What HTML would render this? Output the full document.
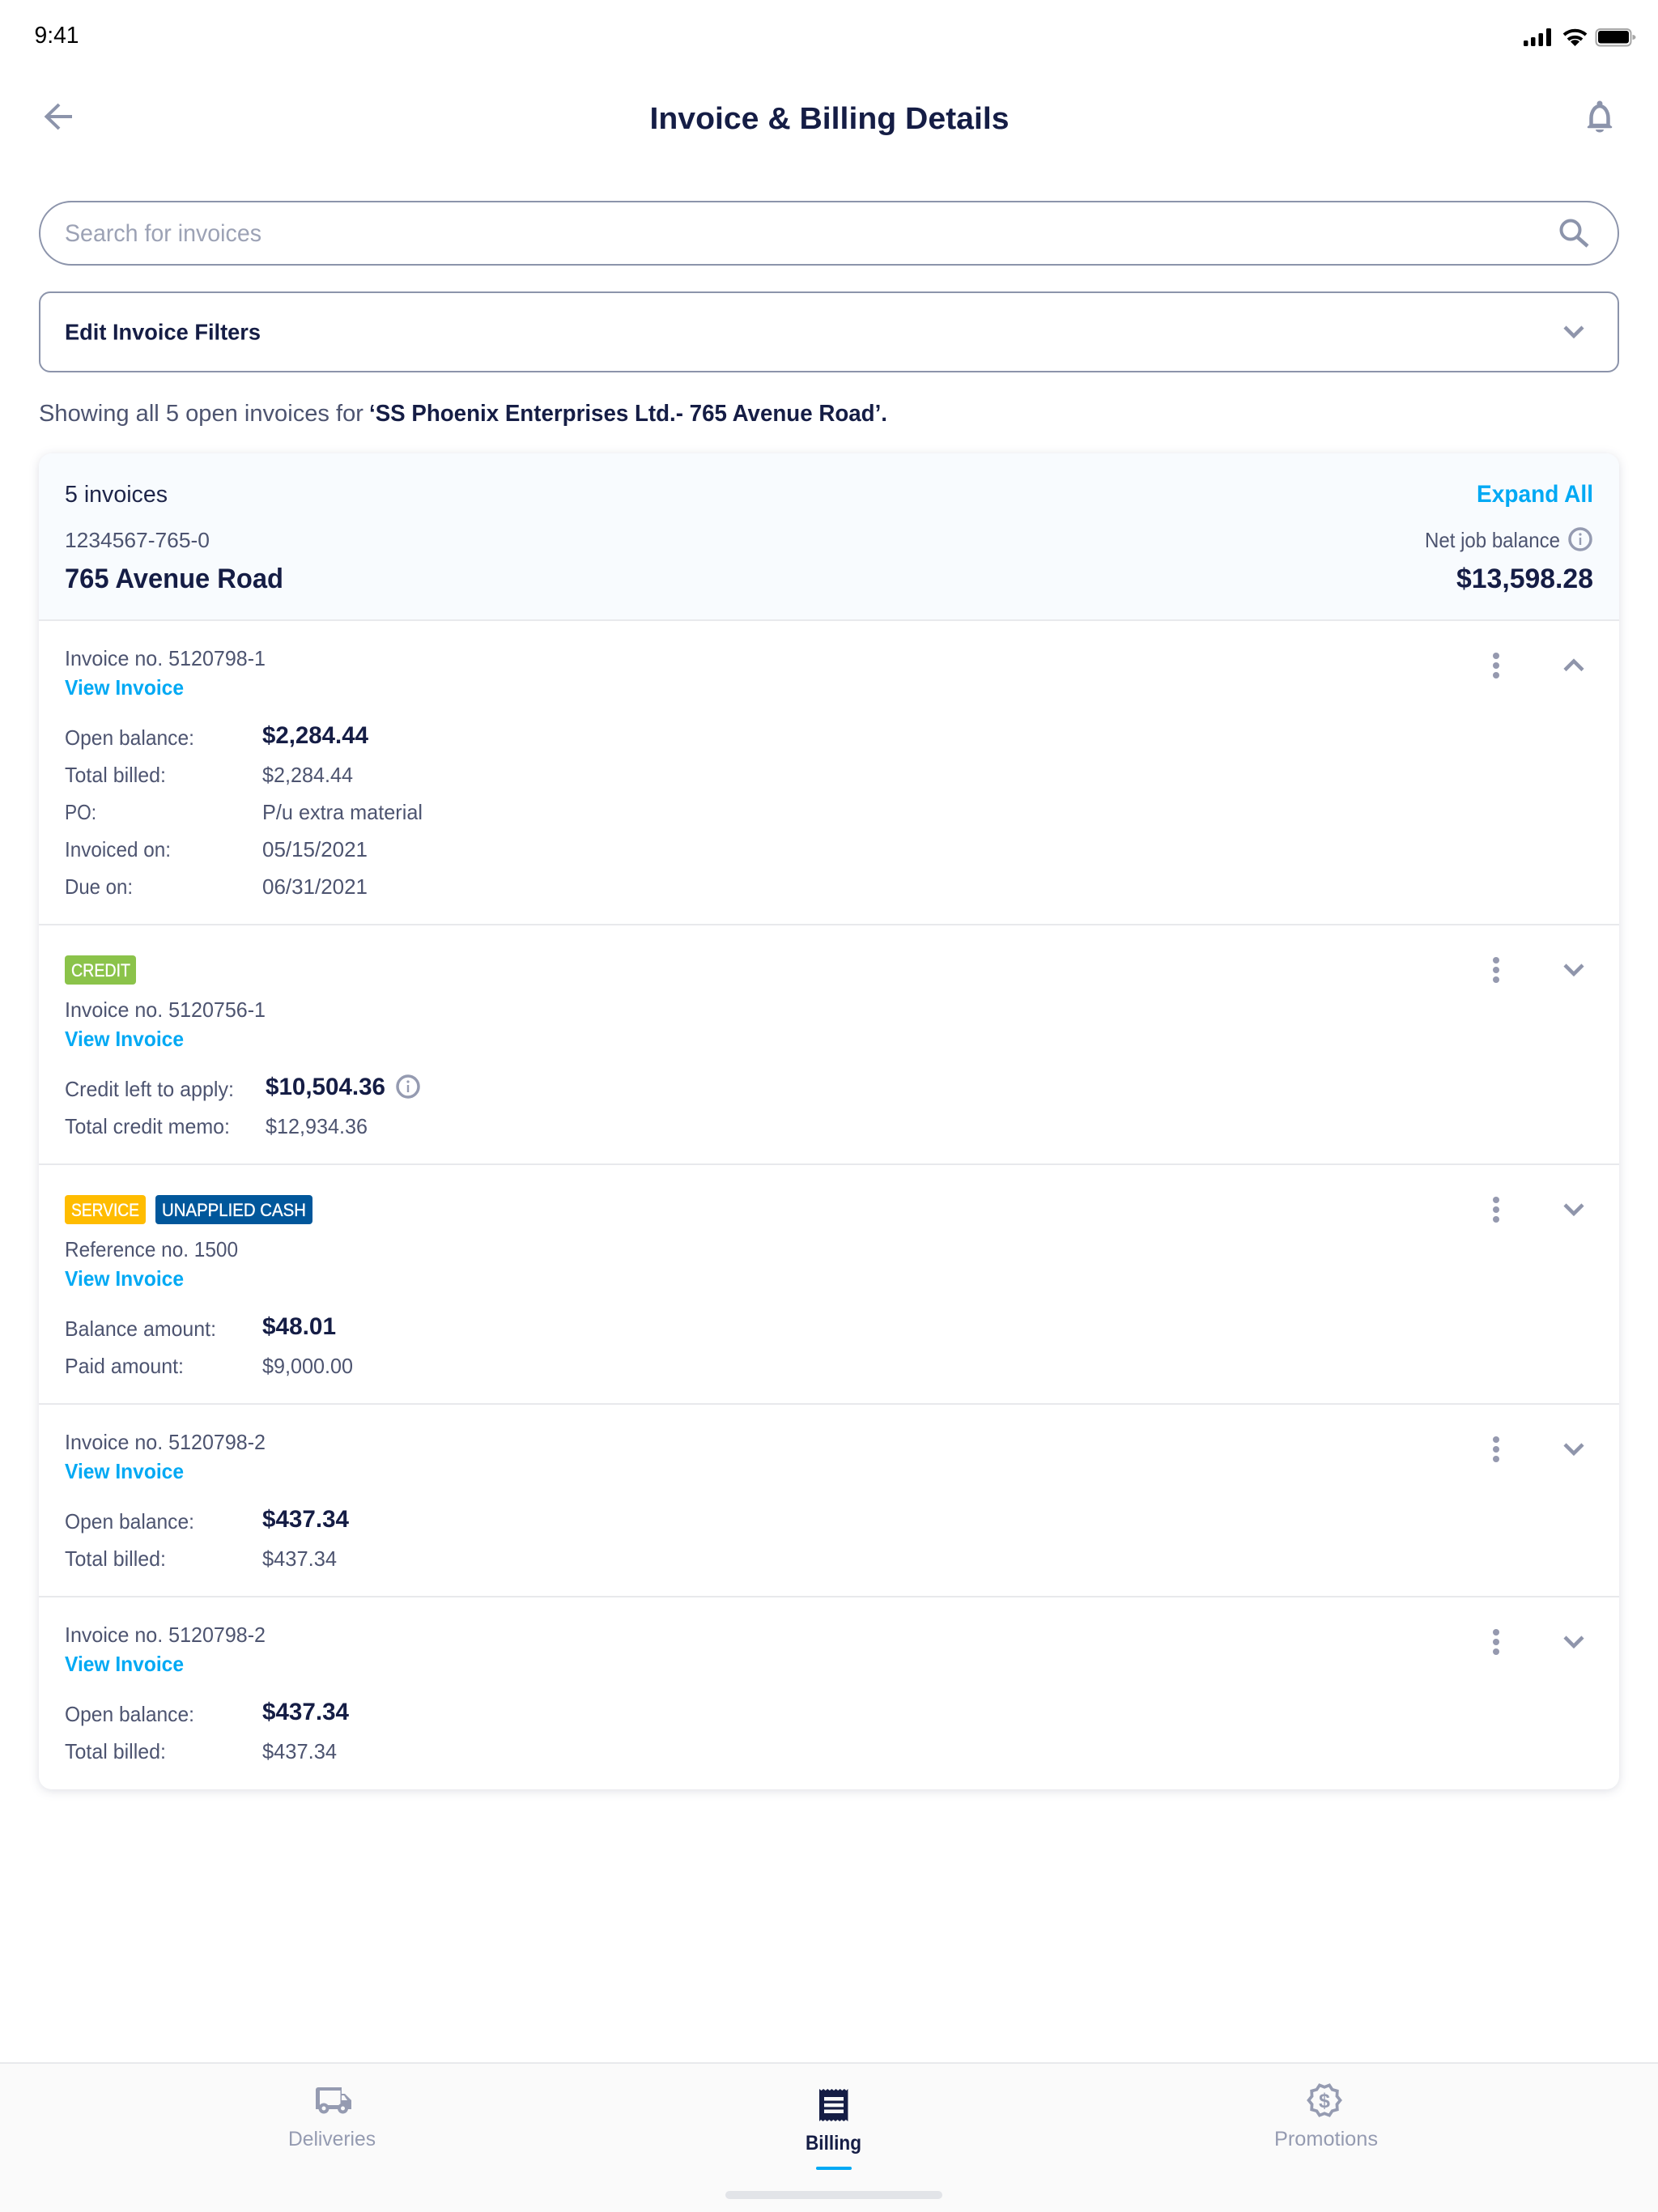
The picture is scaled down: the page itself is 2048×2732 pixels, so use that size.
<!DOCTYPE html>
<html lang="en"><head><meta charset="utf-8"><title>Invoice &amp; Billing Details</title>
<style>
html,body{margin:0;padding:0;background:#fff;width:2048px;height:2732px;overflow:hidden}
svg{display:block}
text{font-family:"Liberation Sans",sans-serif;}
.l{font-size:26px;fill:#4d5470}
.v{font-size:26px;font-weight:700;fill:#00a9f4}
.b{font-size:30px;font-weight:700;fill:#151d45}
.n{stroke:#8c94ab;fill:none}
.t{font-size:22px;fill:#fff;stroke:#fff;stroke-width:.35}
.i{stroke:#959bb1;fill:none;stroke-width:3.5}
.c{stroke:#8f95ab;fill:none;stroke-width:4.5}
</style></head><body>
<svg width="2048" height="2732" viewBox="0 0 2048 2732" xmlns="http://www.w3.org/2000/svg">
<defs>
<g id="dots"><circle cx="0" cy="-12" r="4" fill="#9599af"/><circle cx="0" cy="0" r="4" fill="#9599af"/><circle cx="0" cy="12" r="4" fill="#9599af"/></g>
<path id="down" class="c" d="M-11 -6L0 5L11 -6"/>
<g id="info"><circle r="13" class="i"/><rect x="-1.2" y="-2" width="2.4" height="9" fill="#959bb1"/><circle cy="-6" r="1.6" fill="#959bb1"/></g>
<clipPath id="top"><path d="M48 767V576a16 16 0 0 1 16-16H1984a16 16 0 0 1 16 16V767z"/></clipPath>
</defs>
<rect width="2048" height="2732" fill="#fff"/>

<!-- status bar -->
<text x="42.500" y="53" font-size="29" fill="#000" textLength="55" lengthAdjust="spacingAndGlyphs">9:41</text>
<g fill="#000"><rect x="1882" y="50" width="5.500" height="7" rx="1.500"/><rect x="1891" y="46" width="5.500" height="11" rx="1.500"/><rect x="1900.500" y="41" width="5.500" height="16" rx="1.500"/><rect x="1910" y="35" width="6" height="22" rx="1.500"/></g>
<g fill="none" stroke="#000" stroke-width="4"><path d="M1932 43a20 20 0 0 1 27 0"/><path d="M1937 49a13 13 0 0 1 17 0"/></g>
<path d="M1945.500 57l-5.500-5.500a8 8 0 0 1 11 0z" fill="#000"/>
<rect x="1971.500" y="36" width="43" height="20.500" rx="5" fill="none" stroke="#a6a6a6" stroke-width="2"/>
<rect x="1974" y="38" width="38" height="15.500" rx="3" fill="#000"/>
<path d="M2016.500 43a4 3 0 0 1 0 6z" fill="#a6a6a6"/>

<!-- header -->
<path d="M73 129L57.500 144L73 159M58 144H89" class="n" stroke-width="4"/>
<text x="802.500" y="159" font-size="38" font-weight="700" fill="#151d45" textLength="444" lengthAdjust="spacingAndGlyphs">Invoice &amp; Billing Details</text>
<path d="M1965.500 156V146a10.500 15 0 0 1 21 0V156" class="n" stroke-width="4.500"/>
<circle cx="1976" cy="128" r="3.500" fill="#8c94ab"/>
<path d="M1962 157l4-3h20l4 3z" fill="#8c94ab" stroke="#8c94ab" stroke-width="2.500" stroke-linejoin="round"/>
<path d="M1971 160h10a5 3.500 0 0 1-10 0z" fill="#8c94ab"/>

<!-- search -->
<rect x="49" y="249" width="1950" height="78" rx="39" fill="#fff" stroke="#8c94ab" stroke-width="2"/>
<text x="80" y="298" font-size="30" fill="#9ca2b5" textLength="243" lengthAdjust="spacingAndGlyphs">Search for invoices</text>
<circle cx="1940" cy="284" r="11.500" class="n" stroke-width="4"/><path d="M1948.500 293L1961 304" class="n" stroke-width="4.500"/>

<!-- filters -->
<rect x="49" y="361" width="1950" height="98" rx="13" fill="#fff" stroke="#8c94ab" stroke-width="2"/>
<text x="80" y="419.500" font-size="28" font-weight="700" fill="#151d45" textLength="242" lengthAdjust="spacingAndGlyphs">Edit Invoice Filters</text>
<use href="#down" x="1944" y="410"/>

<text x="48" y="520" font-size="29" fill="#4d5470" textLength="401" lengthAdjust="spacingAndGlyphs">Showing all 5 open invoices for</text>
<text x="456" y="520" font-size="29" font-weight="700" fill="#151d45" textLength="640" lengthAdjust="spacingAndGlyphs">‘SS Phoenix Enterprises Ltd.- 765 Avenue Road’.</text>

<!-- card -->
<rect x="48" y="560" width="1952" height="1650" rx="16" fill="#fff" style="filter:drop-shadow(0 2px 6px rgba(20,30,70,.14))"/>
<rect x="48" y="560" width="1952" height="207" fill="#f8fbfe" clip-path="url(#top)"/>
<g fill="#e8e9ec"><rect x="48" y="765" width="1952" height="2"/><rect x="48" y="1141" width="1952" height="2"/><rect x="48" y="1437" width="1952" height="2"/><rect x="48" y="1733" width="1952" height="2"/><rect x="48" y="1971" width="1952" height="2"/></g>

<text x="80" y="620" font-size="29" fill="#1e2549" textLength="127" lengthAdjust="spacingAndGlyphs">5 invoices</text>
<text x="80" y="676" class="l" textLength="179" lengthAdjust="spacingAndGlyphs">1234567-765-0</text>
<text x="80" y="726" font-size="34" font-weight="700" fill="#151d45" textLength="270" lengthAdjust="spacingAndGlyphs">765 Avenue Road</text>
<text x="1824" y="620" font-size="30" font-weight="700" fill="#00a9f4" textLength="144" lengthAdjust="spacingAndGlyphs">Expand All</text>
<text x="1760" y="676" class="l" textLength="167" lengthAdjust="spacingAndGlyphs">Net job balance</text>
<use href="#info" x="1952" y="666"/>
<text x="1799" y="726" font-size="34" font-weight="700" fill="#151d45" textLength="169" lengthAdjust="spacingAndGlyphs">$13,598.28</text>

<!-- row 1 -->
<text x="80" y="822" class="l" textLength="248" lengthAdjust="spacingAndGlyphs">Invoice no. 5120798-1</text>
<text x="80" y="858" class="v" textLength="147" lengthAdjust="spacingAndGlyphs">View Invoice</text>
<use href="#dots" x="1848" y="822"/>
<path class="c" d="M1933 827.500L1944 816.500L1955 827.500"/>
<text x="80" y="920" class="l" textLength="160" lengthAdjust="spacingAndGlyphs">Open balance:</text>
<text x="324" y="918" class="b" textLength="131" lengthAdjust="spacingAndGlyphs">$2,284.44</text>
<text x="80" y="966" class="l" textLength="125" lengthAdjust="spacingAndGlyphs">Total billed:</text>
<text x="324" y="966" class="l" textLength="112" lengthAdjust="spacingAndGlyphs">$2,284.44</text>
<text x="80" y="1012" class="l" textLength="39" lengthAdjust="spacingAndGlyphs">PO:</text>
<text x="324" y="1012" class="l" textLength="198" lengthAdjust="spacingAndGlyphs">P/u extra material</text>
<text x="80" y="1058" class="l" textLength="131" lengthAdjust="spacingAndGlyphs">Invoiced on:</text>
<text x="324" y="1058" class="l" textLength="130" lengthAdjust="spacingAndGlyphs">05/15/2021</text>
<text x="80" y="1104" class="l" textLength="84" lengthAdjust="spacingAndGlyphs">Due on:</text>
<text x="324" y="1104" class="l" textLength="130" lengthAdjust="spacingAndGlyphs">06/31/2021</text>

<!-- row 2 -->
<rect x="80" y="1180" width="88" height="36" rx="4" fill="#8bc34a"/>
<text x="88" y="1206" class="t" textLength="73" lengthAdjust="spacingAndGlyphs">CREDIT</text>
<text x="80" y="1256" class="l" textLength="248" lengthAdjust="spacingAndGlyphs">Invoice no. 5120756-1</text>
<text x="80" y="1292" class="v" textLength="147" lengthAdjust="spacingAndGlyphs">View Invoice</text>
<use href="#dots" x="1848" y="1198"/><use href="#down" x="1944" y="1198"/>
<text x="80" y="1354" class="l" textLength="209" lengthAdjust="spacingAndGlyphs">Credit left to apply:</text>
<text x="328" y="1352" class="b" textLength="148" lengthAdjust="spacingAndGlyphs">$10,504.36</text>
<use href="#info" x="504" y="1342"/>
<text x="80" y="1400" class="l" textLength="204" lengthAdjust="spacingAndGlyphs">Total credit memo:</text>
<text x="328" y="1400" class="l" textLength="126" lengthAdjust="spacingAndGlyphs">$12,934.36</text>

<!-- row 3 -->
<rect x="80" y="1476" width="100" height="36" rx="4" fill="#ffbc00"/>
<text x="88" y="1502" class="t" textLength="84" lengthAdjust="spacingAndGlyphs">SERVICE</text>
<rect x="192" y="1476" width="194" height="36" rx="4" fill="#01579b"/>
<text x="200" y="1502" class="t" textLength="178" lengthAdjust="spacingAndGlyphs">UNAPPLIED CASH</text>
<text x="80" y="1552" class="l" textLength="214" lengthAdjust="spacingAndGlyphs">Reference no. 1500</text>
<text x="80" y="1588" class="v" textLength="147" lengthAdjust="spacingAndGlyphs">View Invoice</text>
<use href="#dots" x="1848" y="1494"/><use href="#down" x="1944" y="1494"/>
<text x="80" y="1650" class="l" textLength="187" lengthAdjust="spacingAndGlyphs">Balance amount:</text>
<text x="324" y="1648" class="b" textLength="91" lengthAdjust="spacingAndGlyphs">$48.01</text>
<text x="80" y="1696" class="l" textLength="147" lengthAdjust="spacingAndGlyphs">Paid amount:</text>
<text x="324" y="1696" class="l" textLength="112" lengthAdjust="spacingAndGlyphs">$9,000.00</text>

<!-- row 4 -->
<text x="80" y="1790" class="l" textLength="248" lengthAdjust="spacingAndGlyphs">Invoice no. 5120798-2</text>
<text x="80" y="1826" class="v" textLength="147" lengthAdjust="spacingAndGlyphs">View Invoice</text>
<use href="#dots" x="1848" y="1790"/><use href="#down" x="1944" y="1790"/>
<text x="80" y="1888" class="l" textLength="160" lengthAdjust="spacingAndGlyphs">Open balance:</text>
<text x="324" y="1886" class="b" textLength="107" lengthAdjust="spacingAndGlyphs">$437.34</text>
<text x="80" y="1934" class="l" textLength="125" lengthAdjust="spacingAndGlyphs">Total billed:</text>
<text x="324" y="1934" class="l" textLength="92" lengthAdjust="spacingAndGlyphs">$437.34</text>

<!-- row 5 -->
<text x="80" y="2028" class="l" textLength="248" lengthAdjust="spacingAndGlyphs">Invoice no. 5120798-2</text>
<text x="80" y="2064" class="v" textLength="147" lengthAdjust="spacingAndGlyphs">View Invoice</text>
<use href="#dots" x="1848" y="2028"/><use href="#down" x="1944" y="2028"/>
<text x="80" y="2126" class="l" textLength="160" lengthAdjust="spacingAndGlyphs">Open balance:</text>
<text x="324" y="2124" class="b" textLength="107" lengthAdjust="spacingAndGlyphs">$437.34</text>
<text x="80" y="2172" class="l" textLength="125" lengthAdjust="spacingAndGlyphs">Total billed:</text>
<text x="324" y="2172" class="l" textLength="92" lengthAdjust="spacingAndGlyphs">$437.34</text>

<!-- tab bar -->
<rect x="0" y="2547" width="2048" height="185" fill="#fafafa"/>
<rect x="0" y="2547" width="2048" height="2" fill="#e8e9ec"/>

<path fill="#959bb1" d="M390 2581a3 3 0 0 1 3-3h29v8h4l8 8v11h-44z"/>
<rect x="395" y="2582" width="25.500" height="18" fill="#fafafa"/>
<path d="M422 2588h3l4 6h-7z" fill="#fafafa"/>
<circle cx="400" cy="2604" r="6.500" fill="#959bb1"/><circle cx="423.500" cy="2604" r="6.500" fill="#959bb1"/>
<circle cx="400" cy="2604" r="2.500" fill="#fafafa"/><circle cx="423.500" cy="2604" r="2.500" fill="#fafafa"/>
<text x="356" y="2650" font-size="25" fill="#959bb1" textLength="108" lengthAdjust="spacingAndGlyphs">Deliveries</text>

<path fill="#151d45" d="M1012 2580l2.570 2l2.570-2l2.570 2l2.570-2l2.570 2l2.570-2l2.570 2l2.570-2l2.570 2l2.570-2l2.570 2l2.570-2l2.570 2l2.020-2V2620l-2.570-2l-2.570 2l-2.570-2l-2.570 2l-2.570-2l-2.570 2l-2.570-2l-2.570 2l-2.570-2l-2.570 2l-2.570-2l-2.570 2l-2.570-2l-2.020 2z"/>
<g fill="#fafafa"><rect x="1018" y="2590" width="24" height="4.500"/><rect x="1018" y="2597.800" width="24" height="4.500"/><rect x="1018" y="2605.500" width="24" height="4.500"/></g>
<text x="995" y="2655" font-size="25" font-weight="700" fill="#151d45" textLength="69" lengthAdjust="spacingAndGlyphs">Billing</text>
<rect x="1008" y="2676" width="44" height="4" rx="2" fill="#00a9f4"/>

<polygon transform="translate(1636 2594) scale(.93)" fill="none" stroke="#959bb1" stroke-width="4" points="21,0 16.600,5.400 17,12.300 10.300,14.200 6.500,20 0,17.500 -6.500,20 -10.300,14.200 -17,12.300 -16.600,5.400 -21,0 -16.600,-5.400 -17,-12.300 -10.300,-14.200 -6.500,-20 0,-17.500 6.500,-20 10.300,-14.200 17,-12.300 16.600,-5.400"/>
<text x="1636" y="2603" font-size="25" font-weight="700" fill="#959bb1" text-anchor="middle">$</text>
<text x="1574" y="2650" font-size="25" fill="#959bb1" textLength="128" lengthAdjust="spacingAndGlyphs">Promotions</text>

<rect x="896" y="2706" width="268" height="10" rx="5" fill="#e2e4e8"/>
</svg>
</body></html>
